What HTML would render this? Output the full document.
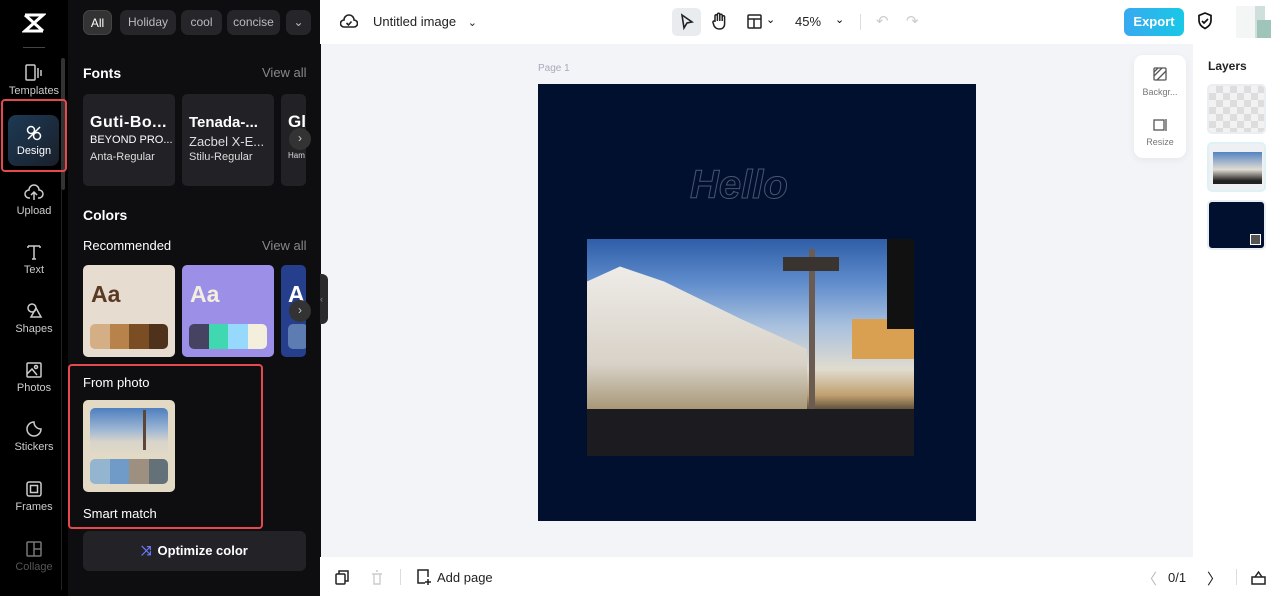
<!DOCTYPE html>
<html><head><meta charset="utf-8"><style>
*{box-sizing:border-box;margin:0;padding:0}
body{width:1280px;height:596px;overflow:hidden;font-family:"Liberation Sans",sans-serif;position:relative;background:#f2f4f7}
.abs{position:absolute}
.rail{left:0;top:0;width:68px;height:596px;background:#000}
.panel{left:68px;top:0;width:253px;height:596px;background:#0e0e10}
.ri{position:absolute;left:0;width:68px;text-align:center;color:#ccc;font-size:11px}
.ri svg{display:block;margin:0 auto 3px}
.chip{position:absolute;top:10px;height:25px;border-radius:7px;background:#26262a;color:#bbb;font-size:12px;line-height:25px;text-align:center;white-space:nowrap}
.h{color:#fff;font-weight:bold;font-size:14px;position:absolute}
.va{color:#888;font-size:13px;position:absolute}
.card{position:absolute;border-radius:5px}
.card div{white-space:nowrap}
.sw{position:absolute;height:25px;border-radius:5px;overflow:hidden;display:flex}
.sw div{flex:1}
.top{left:320px;top:0;width:960px;height:44px;background:#fff}
.bot{left:320px;top:557px;width:960px;height:39px;background:#fff}
.layers{left:1193px;top:44px;width:87px;height:513px;background:#fff}
</style></head><body>
<div class="abs rail">
 <svg class="abs" style="left:22px;top:12px" width="24" height="22" viewBox="0 0 24 22" fill="none" stroke="#fff" stroke-width="3"><path d="M3 3h18L3 19h18M3 3l18 16"/></svg>
 <div class="abs" style="left:23px;top:47px;width:22px;height:1px;background:#444"></div>
 <div class="abs" style="left:61px;top:58px;width:4px;height:132px;background:#333;border-radius:2px"></div>
 <div class="abs" style="left:61px;top:190px;width:1px;height:400px;background:#222"></div>
 <div class="ri" style="top:64px"><svg width="20" height="18" viewBox="0 0 20 18" fill="none" stroke="#ccc" stroke-width="1.5"><rect x="2" y="1" width="9" height="15" rx="1"/><path d="M14 4v10M17 6v6"/></svg>Templates</div>
 <div class="abs" style="left:1px;top:99px;width:66px;height:73px;border:2px solid #e5484d;border-radius:4px"></div>
 <div class="abs" style="left:8px;top:115px;width:51px;height:51px;border-radius:8px;background:linear-gradient(135deg,#1d3a55,#1a1f2a)"></div>
 <div class="ri" style="top:124px;color:#fff"><svg width="18" height="18" viewBox="0 0 18 18" fill="none" stroke="#fff" stroke-width="1.5"><ellipse cx="6" cy="6" rx="3.5" ry="3.5"/><ellipse cx="12" cy="12" rx="3.5" ry="3.5"/><path d="M3 15l12-12"/></svg>Design</div>
 <div class="ri" style="top:184px"><svg width="20" height="18" viewBox="0 0 20 18" fill="none" stroke="#ccc" stroke-width="1.5"><path d="M6 14H5a4 4 0 0 1 0-8 5 5 0 0 1 10 0 4 4 0 0 1 0 8h-1M10 16V8M7 11l3-3 3 3"/></svg>Upload</div>
 <div class="ri" style="top:243px"><svg width="18" height="18" viewBox="0 0 18 18" fill="none" stroke="#ccc" stroke-width="1.5"><path d="M3 3h12M9 3v13M3 3v2M15 3v2M7 16h4"/></svg>Text</div>
 <div class="ri" style="top:302px"><svg width="18" height="18" viewBox="0 0 18 18" fill="none" stroke="#ccc" stroke-width="1.5"><circle cx="7" cy="6" r="4"/><path d="M11 6l5 9H6z"/></svg>Shapes</div>
 <div class="ri" style="top:361px"><svg width="18" height="18" viewBox="0 0 18 18" fill="none" stroke="#ccc" stroke-width="1.5"><rect x="2" y="2" width="14" height="14" rx="1"/><circle cx="11" cy="6" r="1.5"/><path d="M2 13l5-5 5 6"/></svg>Photos</div>
 <div class="ri" style="top:420px"><svg width="18" height="18" viewBox="0 0 18 18" fill="none" stroke="#ccc" stroke-width="1.5"><path d="M16 9a7 7 0 1 1-7-7c0 4 3 7 7 7z"/></svg>Stickers</div>
 <div class="ri" style="top:480px"><svg width="18" height="18" viewBox="0 0 18 18" fill="none" stroke="#ccc" stroke-width="1.5"><rect x="2" y="2" width="14" height="14" rx="2"/><rect x="5.5" y="5.5" width="7" height="7"/></svg>Frames</div>
 <div class="ri" style="top:540px;color:#555"><svg width="18" height="18" viewBox="0 0 18 18" fill="none" stroke="#777" stroke-width="1.5"><rect x="2" y="2" width="14" height="14" rx="1"/><path d="M9 2v14M9 9h7"/></svg>Collage</div>
</div>
<div class="abs panel">
 <div class="chip" style="left:15px;width:29px;background:#333;color:#fff;border:1px solid #444">All</div>
 <div class="chip" style="left:52px;width:56px">Holiday</div>
 <div class="chip" style="left:113px;width:41px">cool</div>
 <div class="chip" style="left:159px;width:53px;overflow:hidden">concise</div>
 <div class="chip" style="left:218px;width:25px">⌄</div>
 <div class="h" style="left:15px;top:65px">Fonts</div><div class="va" style="left:194px;top:65px">View all</div>
 <div class="card" style="left:15px;top:94px;width:92px;height:92px;background:#222226;overflow:hidden">
  <div style="position:absolute;left:7px;top:20px;color:#fff;font:bold 16px 'Liberation Sans Narrow','Liberation Sans';letter-spacing:0.5px">Guti-Bo...</div>
  <div style="position:absolute;left:7px;top:40px;color:#fff;font:11px 'Liberation Sans Narrow','Liberation Sans'">BEYOND PRO...</div>
  <div style="position:absolute;left:7px;top:57px;color:#ddd;font-size:11px">Anta-Regular</div></div>
 <div class="card" style="left:114px;top:94px;width:92px;height:92px;background:#222226;overflow:hidden">
  <div style="position:absolute;left:7px;top:20px;color:#fff;font:bold 15px 'Liberation Sans'">Tenada-...</div>
  <div style="position:absolute;left:7px;top:40px;color:#ddd;font-size:13px">Zacbel X-E...</div>
  <div style="position:absolute;left:7px;top:57px;color:#ddd;font-size:11px">Stilu-Regular</div></div>
 <div class="card" style="left:213px;top:94px;width:25px;height:92px;background:#222226;overflow:hidden">
  <div style="position:absolute;left:7px;top:18px;color:#fff;font:bold 17px 'Liberation Sans'">Gl</div>
  <div style="position:absolute;left:7px;top:57px;color:#ddd;font-size:8px">Ham</div></div>
 <div class="abs" style="left:221px;top:128px;width:22px;height:22px;border-radius:50%;background:#333;color:#ccc;font-size:12px;text-align:center;line-height:21px">›</div>
 <div class="h" style="left:15px;top:207px">Colors</div>
 <div style="position:absolute;left:15px;top:238px;color:#fff;font-size:13px">Recommended</div><div class="va" style="left:194px;top:238px">View all</div>
 <div class="card" style="left:15px;top:265px;width:92px;height:92px;background:#e6dcd0"><div style="position:absolute;left:8px;top:16px;color:#5a3a22;font:bold 23px 'Liberation Sans'">Aa</div>
  <div class="sw" style="left:7px;top:59px;width:78px"><div style="background:#d4ae85"></div><div style="background:#b7834a"></div><div style="background:#7b4d24"></div><div style="background:#4f321b"></div></div></div>
 <div class="card" style="left:114px;top:265px;width:92px;height:92px;background:#9c8fe8"><div style="position:absolute;left:8px;top:16px;color:#f4efdc;font:bold 23px 'Liberation Sans'">Aa</div>
  <div class="sw" style="left:7px;top:59px;width:78px"><div style="background:#464261"></div><div style="background:#3fd8b0"></div><div style="background:#97d9fd"></div><div style="background:#f3efdc"></div></div></div>
 <div class="card" style="left:213px;top:265px;width:25px;height:92px;background:#263f8c;overflow:hidden"><div style="position:absolute;left:7px;top:16px;color:#fff;font:bold 23px 'Liberation Sans'">A</div><div style="position:absolute;left:7px;top:59px;width:20px;height:25px;background:#5d7db2;border-radius:5px"></div></div>
 <div class="abs" style="left:221px;top:300px;width:22px;height:22px;border-radius:50%;background:#333;color:#ccc;font-size:12px;text-align:center;line-height:21px">›</div>
 <div class="abs" style="left:0px;top:364px;width:195px;height:165px;border:2px solid #e5484d;border-radius:4px"></div>
 <div style="position:absolute;left:15px;top:375px;color:#fff;font-size:13px">From photo</div>
 <div class="card" style="left:15px;top:400px;width:92px;height:92px;background:#e3dac6">
  <div style="position:absolute;left:7px;top:8px;width:78px;height:48px;border-radius:5px;background:linear-gradient(180deg,#4e7fbf 0%,#9db6d4 45%,#d8d4ca 70%,#e3dac6 100%)"></div>
  <div style="position:absolute;left:60px;top:10px;width:3px;height:40px;background:#5b4638"></div>
  <div class="sw" style="left:7px;top:59px;width:78px"><div style="background:#93b5d0"></div><div style="background:#709ac7"></div><div style="background:#9e9080"></div><div style="background:#647179"></div></div></div>
 <div style="position:absolute;left:15px;top:506px;color:#fff;font-size:13px">Smart match</div>
 <div class="abs" style="left:15px;top:531px;width:223px;height:40px;border-radius:6px;background:#232327;color:#fff;font-weight:bold;font-size:13px;text-align:center;line-height:40px"><span style="color:#6b7bff;margin-right:6px">⤨</span>Optimize color</div>
</div>
<div class="abs" style="left:320px;top:274px;width:8px;height:50px;background:#2a2a2d;border-radius:0 6px 6px 0;color:#888;font-size:9px;line-height:50px">‹</div>
<div class="abs top">
 <svg class="abs" style="left:20px;top:13px" width="18" height="16" viewBox="0 0 18 16" fill="none" stroke="#222" stroke-width="1.6"><path d="M5 14H4a3.5 3.5 0 0 1 0-7 5 5 0 0 1 10 0 3.5 3.5 0 0 1 0 7H5zM6.5 10l2 2 3-3.5"/></svg>
 <div class="abs" style="left:53px;top:14px;font-size:13px;color:#222">Untitled image <span style="margin-left:8px;font-size:11px">⌄</span></div>
 <div class="abs" style="left:352px;top:8px;width:29px;height:28px;border-radius:5px;background:#e9ecef"></div>
 <svg class="abs" style="left:359px;top:13px" width="16" height="18" viewBox="0 0 16 18" fill="none" stroke="#222" stroke-width="1.6"><path d="M3 2l10 7-5 1-3 5z"/></svg>
 <svg class="abs" style="left:391px;top:12px" width="16" height="19" viewBox="0 0 16 19" fill="none" stroke="#222" stroke-width="1.5"><path d="M4 10V4a1.2 1.2 0 0 1 2.4 0v5V2.5a1.2 1.2 0 0 1 2.4 0V9V3.5a1.2 1.2 0 0 1 2.4 0V9V5a1.2 1.2 0 0 1 2.4 0v7c0 3-2 5-5 5s-4-1-5.5-3L2 10.5a1.2 1.2 0 0 1 2-1.2z"/></svg>
 <svg class="abs" style="left:427px;top:14px" width="15" height="15" viewBox="0 0 15 15" fill="none" stroke="#222" stroke-width="1.5"><rect x="1" y="1" width="13" height="13" rx="1"/><path d="M1 5h13M7 5v9"/></svg>
 <div class="abs" style="left:446px;top:13px;font-size:11px">⌄</div>
 <div class="abs" style="left:475px;top:14px;font-size:13px;color:#222">45%</div>
 <div class="abs" style="left:515px;top:13px;font-size:11px">⌄</div>
 <div class="abs" style="left:540px;top:14px;width:1px;height:16px;background:#ddd"></div>
 <div class="abs" style="left:556px;top:12px;color:#ccc;font-size:15px">↶</div>
 <div class="abs" style="left:586px;top:12px;color:#ccc;font-size:15px">↷</div>
 <div class="abs" style="left:804px;top:8px;width:60px;height:28px;border-radius:6px;background:linear-gradient(90deg,#38a9f0,#18c8e6);color:#fff;font-weight:bold;font-size:13px;text-align:center;line-height:28px">Export</div>
 <svg class="abs" style="left:877px;top:12px" width="16" height="18" viewBox="0 0 16 18" fill="none" stroke="#111" stroke-width="1.7"><path d="M8 1l6 2.5v5c0 4-3 6.5-6 8-3-1.5-6-4-6-8v-5z"/><path d="M5 9l2 2 4-4"/></svg>
 <div class="abs" style="left:916px;top:6px;width:22px;height:32px;background:#f4f6f6"></div>
 <div class="abs" style="left:935px;top:6px;width:10px;height:32px;background:#cfe0dc"></div>
 <div class="abs" style="left:937px;top:20px;width:14px;height:18px;background:#9fc5bb"></div>
</div>
<div class="abs" style="left:538px;top:63px;font-size:10px;color:#aab">Page 1</div>
<div class="abs" style="left:538px;top:84px;width:438px;height:437px;background:#00102e"></div>
<div class="abs" style="left:690px;top:163px;font:italic bold 40px 'Liberation Sans';color:transparent;-webkit-text-stroke:1px #4a5670">Hello</div>
<div class="abs" style="left:587px;top:239px;width:327px;height:217px;background:linear-gradient(180deg,#2f5ea8 0%,#5f8ccc 20%,#a8c0de 40%,#e0dccf 60%,#c0a070 72%,#2a2620 82%,#1a1a1c 100%);overflow:hidden">
 <div style="position:absolute;left:0;top:20px;width:220px;height:150px;background:linear-gradient(180deg,#f0eeea,#d8d2c8 70%,#a89878);clip-path:polygon(0 15%,15% 5%,35% 15%,70% 40%,100% 60%,100% 100%,0 100%)"></div>
 <div style="position:absolute;left:222px;top:10px;width:6px;height:160px;background:#6a5c52"></div>
 <div style="position:absolute;left:196px;top:18px;width:56px;height:14px;background:#3a3430"></div>
 <div style="position:absolute;left:265px;top:80px;width:62px;height:40px;background:#d8a050"></div>
 <div style="position:absolute;left:300px;top:0;width:27px;height:90px;background:#111"></div>
 <div style="position:absolute;left:0;top:170px;width:327px;height:47px;background:#1c1c20"></div>
</div>
<div class="abs" style="left:1134px;top:55px;width:52px;height:103px;background:#fff;border-radius:9px;box-shadow:0 2px 8px rgba(0,0,0,.06)">
 <svg class="abs" style="left:19px;top:12px" width="14" height="14" viewBox="0 0 14 14" fill="none" stroke="#555" stroke-width="1.3"><rect x="1" y="1" width="12" height="12" rx="1"/><path d="M1 9l8-8M4 13l9-9M1 5l4-4"/></svg>
 <div class="abs" style="left:0;width:52px;top:32px;text-align:center;font-size:9px;color:#777">Backgr...</div>
 <svg class="abs" style="left:19px;top:63px" width="14" height="14" viewBox="0 0 14 14" fill="none" stroke="#555" stroke-width="1.3"><rect x="1" y="2" width="10" height="10"/><path d="M13 1v12"/></svg>
 <div class="abs" style="left:0;width:52px;top:82px;text-align:center;font-size:9px;color:#777">Resize</div>
</div>
<div class="abs layers">
 <div class="abs" style="left:15px;top:15px;font-weight:bold;font-size:12px;color:#222">Layers</div>
 <div class="abs" style="left:14px;top:40px;width:59px;height:50px;border-radius:5px;border:2px solid #e8eef2;background-color:#f2f2f2;background-image:linear-gradient(45deg,#ddd 25%,transparent 25%,transparent 75%,#ddd 75%),linear-gradient(45deg,#ddd 25%,transparent 25%,transparent 75%,#ddd 75%);background-size:14px 14px;background-position:0 0,7px 7px"></div>
 <div class="abs" style="left:14px;top:98px;width:59px;height:50px;border-radius:5px;border:2px solid #dff1f5;background:#eef1f3"><div style="position:absolute;left:4px;top:8px;width:49px;height:32px;background:linear-gradient(180deg,#5583c2,#e0dcd2 55%,#222 90%)"></div></div>
 <div class="abs" style="left:14px;top:156px;width:59px;height:50px;border-radius:5px;border:2px solid #e8eef2;background:#00102e"><div style="position:absolute;right:3px;bottom:3px;width:11px;height:11px;border:1px solid #fff;background:#555"></div></div>
</div>
<div class="abs bot">
 <svg class="abs" style="left:15px;top:13px" width="14" height="15" viewBox="0 0 14 15" fill="none" stroke="#222" stroke-width="1.5"><rect x="1" y="4" width="9" height="10" rx="1"/><path d="M4 4V1h9v10h-3"/></svg>
 <svg class="abs" style="left:51px;top:13px" width="12" height="15" viewBox="0 0 12 15" fill="none" stroke="#ccc" stroke-width="1.4"><path d="M1 4h10M3 4v10h6V4M5 1h2"/></svg>
 <div class="abs" style="left:80px;top:12px;width:1px;height:16px;background:#ddd"></div>
 <svg class="abs" style="left:96px;top:12px" width="16" height="17" viewBox="0 0 16 17" fill="none" stroke="#222" stroke-width="1.5"><path d="M9 14H2V1h10v7M12 10v6M9 13h6"/></svg>
 <div class="abs" style="left:117px;top:13px;font-size:13px;color:#222">Add page</div>
 <div class="abs" style="left:822px;top:11px;color:#bbb;font-size:15px">〈</div>
 <div class="abs" style="left:848px;top:13px;font-size:13px;color:#222">0/1</div>
 <div class="abs" style="left:887px;top:11px;color:#222;font-size:15px">〉</div>
 <div class="abs" style="left:916px;top:12px;width:1px;height:16px;background:#ddd"></div>
 <svg class="abs" style="left:931px;top:13px" width="15" height="15" viewBox="0 0 15 15" fill="none" stroke="#222" stroke-width="1.5"><rect x="1" y="7" width="13" height="7"/><path d="M4 7l3.5-5 3.5 5"/></svg>
</div>
</body></html>
